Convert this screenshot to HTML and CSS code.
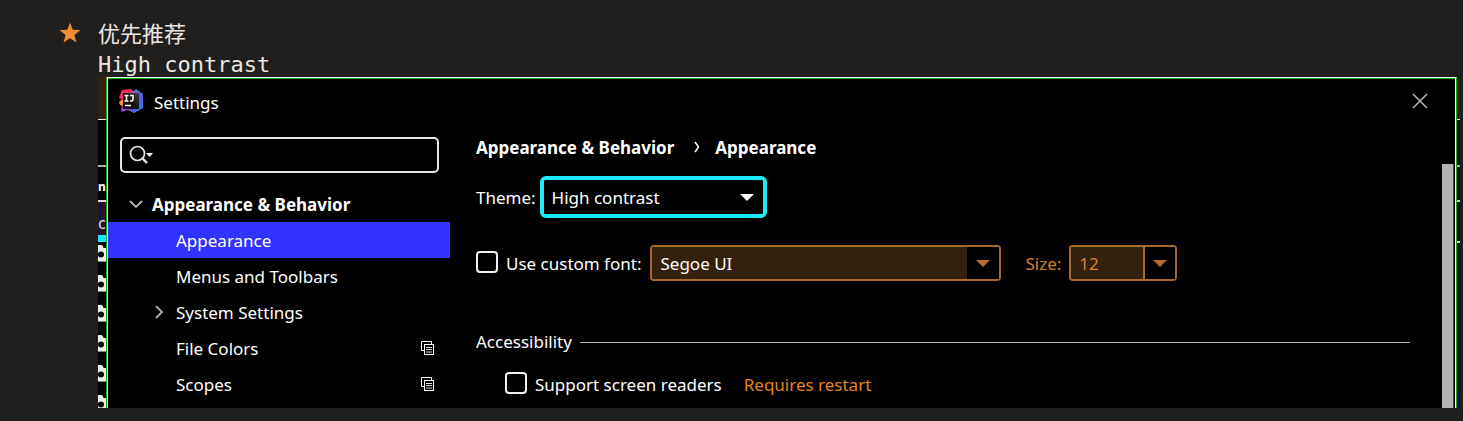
FILE: index.html
```html
<!DOCTYPE html>
<html lang="zh">
<head>
<meta charset="utf-8">
<title>Settings</title>
<link rel="stylesheet" href="styles.css">
</head>
<body>
<main class="note">
  <svg class="star" viewBox="0 0 22 22" aria-hidden="true"><path d="M11 0.5l2.7 7.3 7.8 0.3-6.1 4.9 2.1 7.6L11 16.3l-6.5 4.3 2.1-7.6L0.5 8.1l7.8-0.3z" fill="#f08a33"/></svg>
  <div class="content">
    <p class="line heading">优先推荐</p>
    <p class="line code">High contrast</p>
    <div class="stage">
      <div class="strip strip-left" aria-hidden="true">
        <div class="s-brown"></div>
        <div class="s-menu"></div>
        <div class="s-tab">n</div>
        <div class="s-path">c</div>
        <div class="s-cyan"></div>
        <svg class="s-icons" viewBox="0 0 8 166">
          <defs>
            <g id="node"><path d="M0 0h3q2 0 2.500 3H8v13H0z" fill="#ececec"/><path d="M0 16.500h8" stroke="#8a8a8a"/><circle cx="3" cy="9.500" r="3" fill="#000"/></g>
          </defs>
          <use href="#node" y="3"/><use href="#node" y="33"/><use href="#node" y="63"/><use href="#node" y="93"/><use href="#node" y="123"/><use href="#node" y="153"/>
        </svg>
      </div>
      <section class="dialog">
        <header class="titlebar">
          <svg class="logo" viewBox="0 0 24 24" aria-hidden="true">
            <defs>
              <linearGradient id="lg" x1="0" y1="0" x2="1" y2="1"><stop offset="0" stop-color="#4a6fe8"/><stop offset="1" stop-color="#2f7cf0"/></linearGradient>
              <linearGradient id="lp" x1="0" y1="0" x2="1" y2="0"><stop offset="0" stop-color="#b03bc8"/><stop offset="1" stop-color="#4a5fe0"/></linearGradient>
              <linearGradient id="lk" x1="0" y1="1" x2="1" y2="0"><stop offset="0" stop-color="#000"/><stop offset="0.500" stop-color="#111"/><stop offset="1" stop-color="#444"/></linearGradient>
            </defs>
            <path d="M13 3l4-3 7 5v14l-9 5-7-4z" fill="url(#lg)"/>
            <path d="M20 4l4 2-1 9-3 3z" fill="#6a55d8"/>
            <path d="M3 16l2 3 12 1-2 4-6-3-7 2z" fill="url(#lp)"/>
            <path d="M0 13l4-4v8l-3-1z" fill="#ff8a1e"/>
            <path d="M3 1l9-1 4 4H5v7l-5-2z" fill="#ff2d5f"/>
            <rect x="4" y="4" width="16" height="16" fill="url(#lk)"/>
            <path d="M5.500 6.500h4M7.500 6.500v5.500M5.500 12h4M11 6.500h3v4q0 1.500-1.500 1.500H11M6 16.500h6" fill="none" stroke="#fff" stroke-width="1.500"/>
          </svg>
          <h1 class="title">Settings</h1>
          <button class="close" aria-label="Close"><svg viewBox="0 0 16 16"><path d="M1 1l14 14M15 1L1 15" stroke="#b4b4b4" stroke-width="1.500"/></svg></button>
        </header>
        <div class="body">
          <nav class="sidebar">
            <label class="search">
              <svg class="search-icon" viewBox="0 0 26 20" aria-hidden="true"><circle cx="8.500" cy="8.500" r="7" fill="none" stroke="#e8e8e8" stroke-width="1.700"/><path d="M13 13l5 5" stroke="#e8e8e8" stroke-width="2.400"/><path d="M17 8h7l-3.500 4z" fill="#fff"/></svg>
              <input class="search-input" type="text" aria-label="Search settings">
            </label>
            <ul class="tree">
              <li class="row group"><svg class="chev down" viewBox="0 0 14 14" aria-hidden="true"><path d="M1 3l6 6 6-6" fill="none" stroke="#b4b4b4" stroke-width="1.800"/></svg>Appearance &amp; Behavior</li>
              <li class="row child selected">Appearance</li>
              <li class="row child">Menus and Toolbars</li>
              <li class="row nested"><svg class="chev" viewBox="0 0 14 14" aria-hidden="true"><path d="M4 0l6 6-6 6" fill="none" stroke="#b4b4b4" stroke-width="1.800"/></svg>System Settings</li>
              <li class="row child">File Colors<svg class="copy" viewBox="0 0 14 14" aria-hidden="true"><path d="M3 9.500H.5V.5h10V3" fill="none" stroke="#fff"/><rect x="3.500" y="3.500" width="9" height="10" fill="none" stroke="#fff"/><path d="M5 6.500h6M5 8.500h6M5 11h6" stroke="#ddd"/></svg></li>
              <li class="row child">Scopes<svg class="copy" viewBox="0 0 14 14" aria-hidden="true"><path d="M3 9.500H.5V.5h10V3" fill="none" stroke="#fff"/><rect x="3.500" y="3.500" width="9" height="10" fill="none" stroke="#fff"/><path d="M5 6.500h6M5 8.500h6M5 11h6" stroke="#ddd"/></svg></li>
            </ul>
          </nav>
          <div class="panel">
            <div class="crumbs"><span>Appearance &amp; Behavior</span><svg class="crumb-sep" viewBox="0 0 6 12" aria-hidden="true"><path d="M1 1l3.500 5L1 11" fill="none" stroke="#fff" stroke-width="1.500"/></svg><span>Appearance</span></div>
            <div class="field theme">
              <label for="theme">Theme:</label>
              <div class="combo focus"><select id="theme"><option>High contrast</option></select><span class="arrow"></span></div>
            </div>
            <div class="field font">
              <input class="check" type="checkbox" id="custom"><label for="custom">Use custom font:</label>
              <div class="combo disabled family"><select aria-label="Font" disabled><option>Segoe UI</option></select><span class="arrow"></span></div>
              <label class="size-label" for="size">Size:</label>
              <div class="combo disabled size"><select id="size" disabled><option>12</option></select><span class="arrow"></span></div>
            </div>
            <h2 class="section">Accessibility</h2>
            <div class="field reader">
              <input class="check" type="checkbox" id="reader"><label for="reader">Support screen readers</label><span class="restart">Requires restart</span>
            </div>
          </div>
          <div class="scroll"></div>
        </div>
      </section>
      <div class="strip strip-right" aria-hidden="true">
        <div class="s-brown"></div><div class="s-menu"></div><div class="r-tab"></div><div class="r-path"></div><div class="r-fill"></div><div class="r-navy"></div>
      </div>
    </div>
  </div>
</main>
</body>
</html>
```
FILE: styles.css
```css
* { box-sizing: border-box; }
body { margin: 0; background: #211f1e; color: #fff; font: 17px/24px "Noto Sans", "Open Sans", sans-serif; }
p, h1, h2, ul { margin: 0; padding: 0; font-size: inherit; font-weight: normal; list-style: none; }
.note { display: flex; padding: 17px 3px 13px 59px; }
.star { width: 22px; height: 22px; margin: 5px 17px 0 0; flex: none; }
.content { flex: 1; min-width: 0; }
.line { height: 30px; font-size: 22px; line-height: 30px; color: #ebe8e4; }
.heading { font-family: "Noto Sans CJK SC", sans-serif; }
.code { font-family: "DejaVu Sans Mono", monospace; line-height: 36px; }
.stage { display: flex; background: #000; }

.strip { display: flex; flex-direction: column; overflow: hidden; flex: none; }
.strip-left { width: 8px; }
.strip-right { width: 3px; }
.s-brown { height: 43px; background: #33200d; border-bottom: 1px solid #eee; }
.s-menu { height: 47px; border-bottom: 2px solid #aaa; }
.s-tab { height: 35px; border-bottom: 2px solid #ddd; font-size: 12px; font-weight: bold; line-height: 40px; }
.s-path { height: 33px; background: #22152b; color: #ddd; font-size: 16px; line-height: 42px; }
.s-cyan { height: 7px; background: #1ae6ff; }
.s-icons { width: 8px; height: 166px; }
.r-tab { height: 35px; border-bottom: 2px solid #ccc; }
.r-path { height: 41px; border-bottom: 2px solid #ccc; }
.r-fill { flex: 1; background: #111; }
.r-navy { height: 16px; background: #000060; }

.dialog { flex: 1; min-width: 0; display: flex; flex-direction: column; border: 1px solid; border-color: #e8ffe8 #0fae0f #000 #0fae0f; border-bottom: 0; box-shadow: inset 1px 0 #fff, inset -1px 0 #fff, inset 0 1px #0fae0f; padding: 1px 1px 0; }
.titlebar { display: flex; align-items: center; height: 46px; padding: 0 27px 0 11px; }
.logo { width: 24px; height: 24px; margin-bottom: 2px; }
.title { margin-left: 11px; padding-top: 1px; }
.close { margin: 0 0 2px auto; display: flex; padding: 0; border: 0; background: none; }
.close svg { width: 16px; height: 16px; }
.body { flex: 1; display: flex; }

.sidebar { width: 342px; padding: 12px 0 6px; flex: none; }
.search { display: flex; align-items: center; height: 36px; margin: 0 11px 13px 12px; padding-left: 7px; border: 2px solid #e6e6e6; border-radius: 5px; }
.search-icon { width: 26px; height: 20px; flex: none; }
.search-input { flex: 1; min-width: 0; border: 0; outline: 0; background: none; color: #fff; font: inherit; }
.row { display: flex; align-items: center; height: 36px; padding: 2px 15px 0 21px; }
.group { font-weight: bold; }
.child { padding-left: 68px; }
.nested { padding-left: 44px; }
.selected { background: #3333ff; }
.chev { width: 14px; height: 14px; margin-right: 10px; }
.down { margin-right: 9px; }
.copy { width: 14px; height: 14px; margin: 0 0 2px auto; }

.panel { flex: 1; min-width: 0; padding: 4px 32px 0 26px; }
.crumbs { display: flex; align-items: center; height: 36px; padding-top: 2px; font-weight: bold; }
.crumb-sep { width: 6px; height: 12px; margin: 0 15px 2px 20px; }
.field { display: flex; align-items: center; }
.field label, .restart { padding-top: 2px; }
.theme { margin-top: 11px; gap: 4px; }
.font { margin-top: 27px; }
.combo { position: relative; display: flex; }
.combo select { appearance: none; width: 100%; height: 100%; margin: 0; padding: 2px 8px 0; border: 0; border-radius: 2px; outline: 0; background: #000; color: #fff; opacity: 1; font: inherit; }
.arrow { position: absolute; top: 0; right: 0; bottom: 0; display: flex; align-items: center; justify-content: center; width: 32px; pointer-events: none; }
.arrow::after { content: ""; border: 7px solid transparent; border-top-color: #fff; border-bottom: 0; }
.focus { width: 227px; height: 42px; border: 4px solid #1aebff; border-radius: 6px; }
.disabled { height: 36px; border: 2px solid #a8692a; border-radius: 4px; }
.disabled select { background: #33200d; }
.disabled .arrow { background: #000; }
.disabled .arrow::after { border-top-color: #b3702b; }
.family { width: 351px; margin-left: 9px; }
.size { width: 108px; margin-left: 8px; }
.size select { color: #d9801a; }
.size .arrow { border-left: 2px solid #a8692a; }
.size-label { margin-left: 24px; color: #d9801a; }
.check { appearance: none; width: 22px; height: 22px; margin: 0 8px 2px 0; border: 2px solid #f0f0f0; border-radius: 4px; background: #000; }
.section { display: flex; align-items: center; gap: 8px; height: 36px; margin-top: 43px; }
.section::after { content: ""; flex: 1; height: 1px; background: #b3b3b3; }
.reader { height: 36px; margin-top: 6px; padding-left: 29px; }
.restart { margin-left: 22px; color: #e0861c; }
.scroll { width: 12px; margin: 39px 1px 0 0; background: #b3b3b3; border-right: 1px solid #444; }
```
